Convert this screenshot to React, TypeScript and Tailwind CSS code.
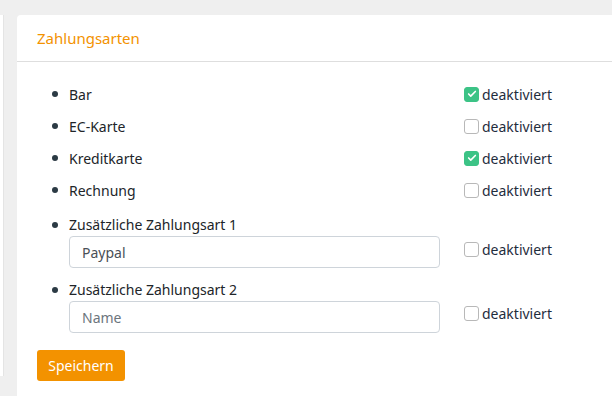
import { Check } from 'lucide-react';

const METHODS = [
    { label: 'Bar', checked: true },
    { label: 'EC-Karte', checked: false },
    { label: 'Kreditkarte', checked: true },
    { label: 'Rechnung', checked: false },
];

function Toggle({ checked }: { checked: boolean }) {
    return (
        <label className="flex items-center gap-[3px] h-5 -ml-px">
            <span
                className={`w-[15px] h-[15px] rounded-[3px] flex items-center justify-center ${checked
                        ? 'bg-[#3cc386] border border-[#3cc386]'
                        : 'bg-white border border-[#b8b8b8]'
                    }`}
            >
                {checked && <Check size={10} strokeWidth={4} className="text-white" />}
            </span>
            <span className="text-[14px] text-[#1f2d3d]">deaktiviert</span>
        </label>
    );
}

function Bullet() {
    return (
        <span className="w-8 h-5 shrink-0 flex items-center pl-[15px]">
            <span className="w-[6px] h-[6px] rounded-full bg-[#2b3a44]" />
        </span>
    );
}

export default function App() {
    return (
        <div className="w-[612px] h-[396px] overflow-hidden bg-[#efefef] flex pt-[15px] font-['Noto_Sans',sans-serif] text-[#212529]">
            {/* left panel edge */}
            <div className="w-[4px] h-[361px] bg-white border-r border-[#e4e4e4] shrink-0" />

            {/* Card */}
            <div className="ml-[13px] flex-1 bg-white rounded-tl-[4px] min-w-[640px]">
                <div className="h-[47px] border-b border-[#dedede] px-5 flex items-center">
                    <h2 className="text-[15px] text-[#f39200]">Zahlungsarten</h2>
                </div>

                <div className="px-5 pt-[16px]">
                    {METHODS.map((m) => (
                        <div key={m.label} className="flex items-center h-8">
                            <Bullet />
                            <span className="w-[396px] text-[14px]">{m.label}</span>
                            <Toggle checked={m.checked} />
                        </div>
                    ))}

                    <div className="flex mt-[9px]">
                        <Bullet />
                        <div className="w-[371px]">
                            <div className="h-5 text-[14px] leading-5">Zusätzliche Zahlungsart 1</div>
                            <input
                                type="text"
                                defaultValue="Paypal"
                                className="block mt-px w-full h-8 px-3 border border-[#ced4da] rounded-[4px] text-[14px] text-[#495057] outline-none"
                            />
                        </div>
                        <div className="ml-[25px] pt-[24px]">
                            <Toggle checked={false} />
                        </div>
                    </div>

                    <div className="flex mt-3">
                        <Bullet />
                        <div className="w-[371px]">
                            <div className="h-5 text-[14px] leading-5">Zusätzliche Zahlungsart 2</div>
                            <input
                                type="text"
                                placeholder="Name"
                                className="block mt-px w-full h-8 px-3 border border-[#ced4da] rounded-[4px] text-[14px] text-[#495057] placeholder:text-[#6c757d] outline-none"
                            />
                        </div>
                        <div className="ml-[25px] pt-[23px]">
                            <Toggle checked={false} />
                        </div>
                    </div>

                    <button className="mt-[17px] w-[88px] h-[31px] bg-[#f39200] text-white text-[14px] rounded-[3px]">
                        Speichern
                    </button>
                </div>
            </div>
        </div>
    );
}
